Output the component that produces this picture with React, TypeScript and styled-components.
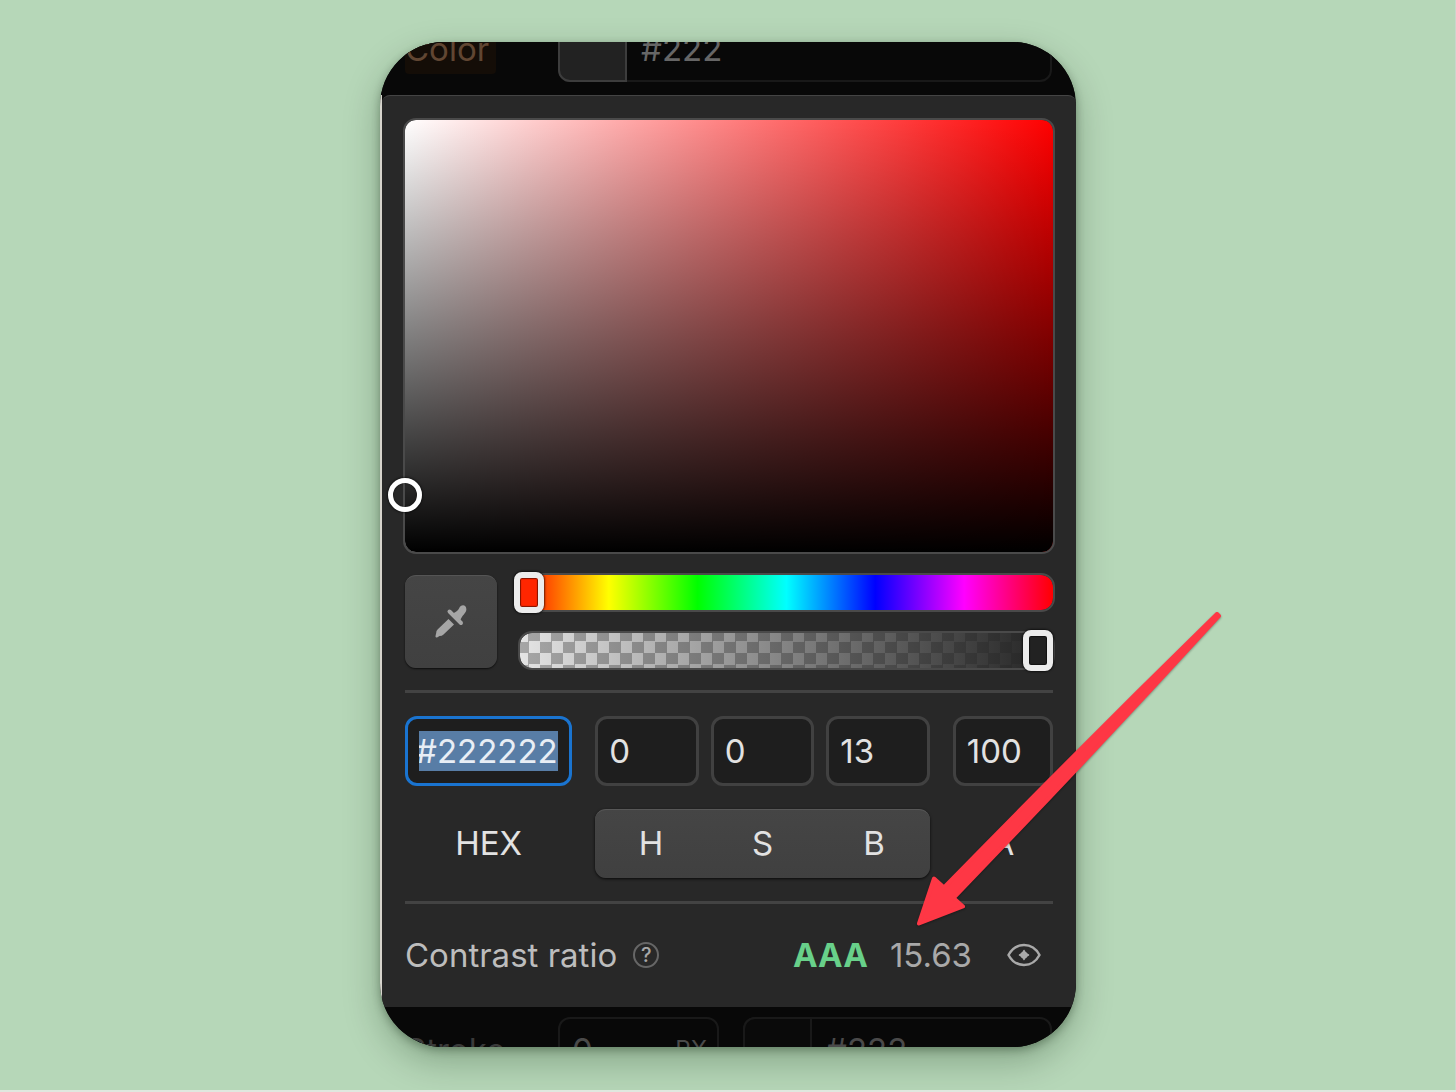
import React, { useEffect, useRef, useState } from "react";
import styled, { createGlobalStyle } from "styled-components";

const FONT = 'Inter, "Liberation Sans", sans-serif';

const GlobalStyle = createGlobalStyle`
  *, *::before, *::after { box-sizing: border-box; }
  body { margin: 0; background: #b6d7b8; font-family: ${FONT}; }
  button, input { font: inherit; color: inherit; margin: 0; }
`;

const Page = styled.main`
  min-height: 100vh;
  display: flex;
  justify-content: center;
  align-items: flex-start;
  padding: 42px 0;
  background: #b6d7b8;
  border-bottom: 2px solid #dfe8df;
  box-shadow: inset -1px 0 #c9d6cb;
  font-size: 33px;
  line-height: 40px;
  overflow: hidden;
`;

const Frame = styled.div`
  position: relative;
  width: 100%;
  max-width: 696px;
`;

const Card = styled.section`
  border-radius: 64px;
  overflow: hidden;
  background: #080808;
  box-shadow: 0 14px 36px rgba(0, 30, 0, 0.27), 0 3px 8px rgba(0, 20, 0, 0.3);
`;

const Backdrop = styled.div<{ $edge: "top" | "bottom" }>`
  height: ${(p) => (p.$edge === "top" ? 53 : 40)}px;
  padding: ${(p) => (p.$edge === "top" ? "0 24px 13px 25px" : "10px 24px 0 25px")};
  display: grid;
  grid-template-columns: 153px 1fr;
  align-content: ${(p) => (p.$edge === "top" ? "end" : "start")};
  align-items: center;
  overflow: hidden;
  background: #080808;
`;

const BackdropLabel = styled.span<{ $highlight?: boolean }>`
  justify-self: start;
  padding: 5px 7px 5px 0;
  border-radius: 4px;
  color: ${(p) => (p.$highlight ? "#614632" : "#3a3a3a")};
  background: ${(p) => (p.$highlight ? "#140d07" : "transparent")};
`;

const BackdropFields = styled.div`
  display: grid;
  grid-template-columns: 161px 1fr;
  gap: 24px;
`;

const BackdropField = styled.div<{ $bright?: boolean }>`
  height: 66px;
  display: flex;
  align-items: center;
  border: 2px solid #191919;
  border-radius: 12px;
  color: ${(p) => (p.$bright ? "#666" : "#4a4a4a")};
`;

const Swatch = styled.span<{ $bright?: boolean }>`
  align-self: stretch;
  width: 69px;
  margin: -2px 14px -2px -2px;
  border: 2px solid ${(p) => (p.$bright ? "#3d3d3d" : "#191919")};
  border-radius: 12px 0 0 12px;
  background: ${(p) => (p.$bright ? "#222" : "#0a0a0a")};
`;

const Amount = styled.span`
  flex: 1;
  padding-left: 12px;
`;

const Unit = styled.span`
  padding-right: 10px;
  font-size: 24px;
`;

const Popover = styled.div`
  border-left: 2px solid #d6d4cc;
`;

const PopoverBody = styled.div`
  padding: 22px 23px 0;
  border-top: 1px solid #444;
  border-radius: 8px 8px 0 0;
  background: #282828;
`;

const ColorArea = styled.div`
  position: relative;
  height: 436px;
  margin: 0 -2px 19px;
  border: 2px solid #4a4a4a;
  border-radius: 13px;
  background: linear-gradient(to top, #000, transparent) padding-box,
    linear-gradient(to right, #fff, #f00) padding-box;
`;

const AreaHandle = styled.span`
  position: absolute;
  top: 358px;
  left: -17px;
  width: 34px;
  height: 34px;
  border: 5px solid #fff;
  border-radius: 50%;
  box-shadow: 0 0 2px 1px rgba(0, 0, 0, 0.5), inset 0 0 2px rgba(0, 0, 0, 0.6);
`;

const Tools = styled.div`
  display: flex;
  align-items: center;
  gap: 21px;
`;

const PickButton = styled.button`
  flex: none;
  width: 92px;
  height: 93px;
  padding: 0;
  display: grid;
  place-items: center;
  border: 0;
  border-top: 1px solid #555;
  border-radius: 11px;
  background: linear-gradient(#454545, #404040);
  box-shadow: 0 1px 2px rgba(0, 0, 0, 0.7);
`;

const Sliders = styled.div`
  flex: 1;
  display: grid;
  gap: 19px;
  margin-right: -2px;
`;

const Track = styled.div<{ $kind: "hue" | "alpha" }>`
  height: 39px;
  border: 2px solid #4a4a4a;
  border-radius: 14px;
  background: ${(p) =>
    p.$kind === "hue"
      ? "linear-gradient(to right, #f00, #ff0, #0f0, #0ff, #00f, #f0f, #f00) padding-box"
      : `linear-gradient(to right, rgba(34, 34, 34, 0), #222) padding-box,
         repeating-conic-gradient(#a6a6a6 0 25%, #e4e4e4 0 50%) -3px -3px / 23px 23px padding-box`};
`;

const Range = styled.input<{ $fill: string }>`
  appearance: none;
  display: block;
  width: calc(100% + 6px);
  height: 41px;
  margin: -3px 0 -3px -6px;
  background: transparent;
  outline: none;

  &::-webkit-slider-thumb {
    appearance: none;
    width: 30px;
    height: 41px;
    border: 6px solid #ececec;
    border-radius: 8px;
    background: ${(p) => p.$fill};
    box-shadow: 0 0 2px 1px rgba(0, 0, 0, 0.6), inset 0 0 1px 1px rgba(0, 0, 0, 0.5);
  }
`;

const Divider = styled.hr<{ $before: number; $after: number }>`
  height: 3px;
  margin: ${(p) => p.$before}px 0 ${(p) => p.$after}px;
  border: 0;
  background: #434343;
`;

const Columns = styled.div`
  display: grid;
  grid-template-columns: 167fr 334fr 100fr;
  column-gap: 23px;
  row-gap: 23px;
`;

const Triple = styled.div`
  display: grid;
  grid-template-columns: repeat(3, 1fr);
  gap: 12px;
`;

const Field = styled.input`
  width: 100%;
  min-width: 0;
  height: 70px;
  padding: 0 11px;
  border: 3px solid #414141;
  border-radius: 12px;
  outline: none;
  background: #1e1e1e;
  color: #e2e2e2;
  line-height: 40px;

  &:focus { border-color: #1a74d0; }
  &::selection { background: #587da6; color: #e8eef5; }
`;

const ModeButton = styled.button<{ $raised?: boolean }>`
  height: 69px;
  padding: 0 0 2px;
  display: grid;
  grid-auto-flow: column;
  grid-auto-columns: 1fr;
  place-items: center;
  border: 0;
  border-top: 1px solid ${(p) => (p.$raised ? "#585858" : "transparent")};
  border-radius: 11px;
  background: ${(p) => (p.$raised ? "linear-gradient(#454545, #404040)" : "transparent")};
  box-shadow: ${(p) => (p.$raised ? "0 1px 3px rgba(0, 0, 0, 0.8)" : "none")};
  color: #e2e2e2;
`;

const Contrast = styled.div`
  height: 103px;
  padding-bottom: 2px;
  display: flex;
  align-items: center;
  color: #bdbdbd;
`;

const HelpButton = styled.button`
  width: 26px;
  height: 26px;
  margin-left: 16px;
  padding: 0;
  border: 2px solid #666;
  border-radius: 50%;
  background: none;
  color: #a8a8a8;
  font-size: 20px;
  font-weight: 500;
  line-height: 22px;
`;

const Grade = styled.strong`
  margin-left: auto;
  color: #68d08a;
  font-weight: 700;
`;

const Ratio = styled.span`
  margin-left: 22px;
  color: #a9a9a9;
`;

const EyeButton = styled.button`
  margin: 0 12px 0 35px;
  padding: 0;
  border: 0;
  display: grid;
  background: none;
`;

const Arrow = styled.svg`
  position: absolute;
  top: 564px;
  left: 530px;
  width: 320px;
  height: 330px;
  pointer-events: none;
  filter: drop-shadow(0 1px 1px rgba(0, 0, 0, 0.35));
`;

function DropperIcon() {
  return (
    <svg width="34" height="36" viewBox="0 0 34 36" fill="#a6a6a6" aria-hidden="true">
      <path d="M14.5 15 20 20.500 9.500 30.500Q8 32 5.500 32L3.500 33.200Q.8 34 1.600 31.500L2.200 29Q2 27 3.800 25.300Z" />
      <path d="M18.500 9.500Q23.500 7.500 25 4.500C27-.5 33 .5 32.300 6 31.800 9.500 28.500 10.500 26 17Z" />
      <path d="M15.500 7.500 27 19" stroke="#a6a6a6" strokeWidth="4" strokeLinecap="round" />
    </svg>
  );
}

function EyeIcon() {
  return (
    <svg width="34" height="26" viewBox="1 0 34 26" fill="none" aria-hidden="true">
      <path
        d="M2.500 13C6 6.500 11.500 3 18 3S30 6.500 33.500 13C30 19.500 24.500 23 18 23S6 19.500 2.500 13Z"
        stroke="#a9a9a9"
        strokeWidth="2.500"
        strokeLinejoin="round"
      />
      <path
        d="M18 8.500 19.500 11.500 22.500 13 19.500 14.500 18 17.500 16.500 14.500 13.500 13 16.500 11.500Z"
        fill="#a9a9a9"
        stroke="#a9a9a9"
        strokeWidth="1.500"
        strokeLinejoin="round"
      />
      <circle cx="18" cy="13" r="3.500" fill="#a9a9a9" />
    </svg>
  );
}

export default function App() {
  const hexRef = useRef<HTMLInputElement>(null);
  const [hex, setHex] = useState("#222222");
  const [hsb, setHsb] = useState({ Hue: "0", Saturation: "0", Brightness: "13" });
  const [alpha, setAlpha] = useState("100");

  useEffect(() => {
    hexRef.current?.focus();
    hexRef.current?.select();
  }, []);

  return (
    <>
      <GlobalStyle />
      <Page>
        <Frame>
          <Card aria-label="Color picker">
            <Backdrop $edge="top">
              <BackdropLabel $highlight>Color</BackdropLabel>
              <BackdropField $bright>
                <Swatch $bright />
                <span>#222</span>
              </BackdropField>
            </Backdrop>

            <Popover>
              <PopoverBody>
                <ColorArea>
                  <AreaHandle />
                </ColorArea>

                <Tools>
                  <PickButton type="button" aria-label="Pick a color from the page">
                    <DropperIcon />
                  </PickButton>
                  <Sliders>
                    <Track $kind="hue">
                      <Range
                        type="range"
                        aria-label="Hue"
                        min={0}
                        max={360}
                        value={hsb.Hue}
                        onChange={(e) => setHsb({ ...hsb, Hue: e.target.value })}
                        $fill="#ff2600"
                      />
                    </Track>
                    <Track $kind="alpha">
                      <Range
                        type="range"
                        aria-label="Alpha"
                        min={0}
                        max={100}
                        value={alpha}
                        onChange={(e) => setAlpha(e.target.value)}
                        $fill="#222"
                      />
                    </Track>
                  </Sliders>
                </Tools>

                <Divider $before={20} $after={23} />

                <Columns>
                  <Field ref={hexRef} aria-label="Hex" value={hex} onChange={(e) => setHex(e.target.value)} />
                  <Triple>
                    {(Object.keys(hsb) as (keyof typeof hsb)[]).map((key) => (
                      <Field
                        key={key}
                        aria-label={key}
                        value={hsb[key]}
                        onChange={(e) => setHsb({ ...hsb, [key]: e.target.value })}
                      />
                    ))}
                  </Triple>
                  <Field aria-label="Alpha percent" value={alpha} onChange={(e) => setAlpha(e.target.value)} />
                  <ModeButton type="button">HEX</ModeButton>
                  <ModeButton type="button" $raised>
                    <span>H</span>
                    <span>S</span>
                    <span>B</span>
                  </ModeButton>
                  <ModeButton type="button">A</ModeButton>
                </Columns>

                <Divider $before={23} $after={0} />

                <Contrast>
                  <span>Contrast ratio</span>
                  <HelpButton type="button" aria-label="About contrast ratio">?</HelpButton>
                  <Grade>AAA</Grade>
                  <Ratio>15.63</Ratio>
                  <EyeButton type="button" aria-label="Preview contrast">
                    <EyeIcon />
                  </EyeButton>
                </Contrast>
              </PopoverBody>
            </Popover>

            <Backdrop $edge="bottom">
              <BackdropLabel>Stroke</BackdropLabel>
              <BackdropFields>
                <BackdropField>
                  <Amount>0</Amount>
                  <Unit>PX</Unit>
                </BackdropField>
                <BackdropField>
                  <Swatch />
                  <span>#222</span>
                </BackdropField>
              </BackdropFields>
            </Backdrop>
          </Card>

          <Arrow viewBox="910 606 320 330" aria-hidden="true">
            <path
              d="M1217 614Q1079 749 944 887.500L934 878.500 919 923.500 963 906.500 953.500 898Q1088 759 1219 616Z"
              fill="#fe3745"
              stroke="#fe3745"
              strokeWidth="4"
              strokeLinejoin="round"
            />
          </Arrow>
        </Frame>
      </Page>
    </>
  );
}
